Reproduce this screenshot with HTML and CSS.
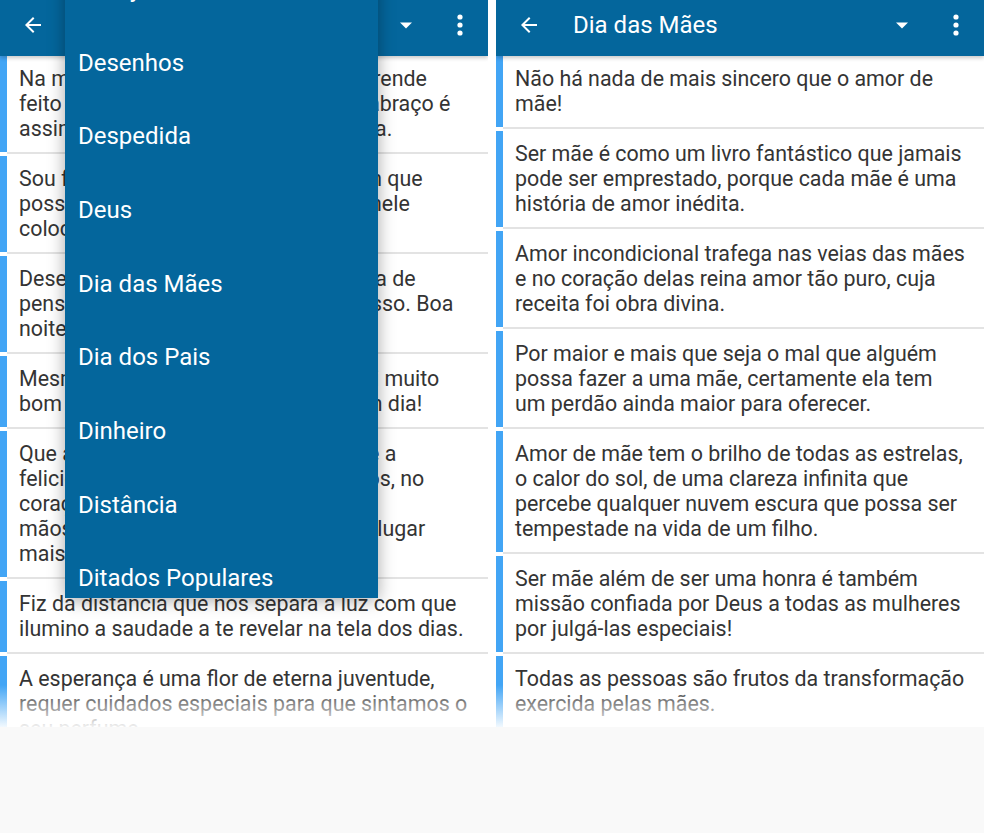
FILE: index.html
```html
<!DOCTYPE html>
<html lang="pt">
<head>
<meta charset="utf-8">
<title>Mensagens</title>
<link rel="stylesheet" href="styles.css">
</head>
<body>
<div class="screens">
  <section class="phone">
    <header class="appbar">
      <svg class="back" viewBox="0 0 24 24" width="24" height="24"><path d="M20 11H7.83l5.59-5.59L12 4l-8 8 8 8 1.41-1.41L7.83 13H20v-2z" fill="#fff"/></svg>
      <span class="title">Boa Noite</span>
      <svg class="drop" viewBox="0 0 14 7" width="14" height="7"><path d="M1 0.5h12L7 6.5z" fill="#fff"/></svg>
      <svg class="kebab" viewBox="0 0 6 22" width="6" height="22"><circle cx="3" cy="3" r="2.6" fill="#fff"/><circle cx="3" cy="11" r="2.6" fill="#fff"/><circle cx="3" cy="19" r="2.6" fill="#fff"/></svg>
    </header>
    <ul class="list">
      <li class="card"><p class="text">Na minha vida, a arte mais bela se aprende<br>feito um carinho leve, é que um bom abraço é<br>assim sempre cura uma alma cansada.</p></li>
      <li class="card"><p class="text">Sou feliz por ter na minha vida alguém que<br>possa me entender, confiar tudo que nele<br>colocar todos os meus sonhos.</p></li>
      <li class="card"><p class="text">Desejo que sua noite seja doce e cheia de<br>pensamentos bons, você só merece isso. Boa<br>noite!</p></li>
      <li class="card"><p class="text">Mesmo que o dia tenha sido difícil, foi muito<br>bom ter você por perto, tenha um bom dia!</p></li>
      <li class="card"><p class="text">Que a noite traga paz e a calma, e que a<br>felicidade esteja sempre em teus olhos, no<br>coração, e em cada gesto, e nas tuas<br>mãos, os sonhos que te levarão a um lugar<br>mais seguro.</p></li>
      <li class="card"><p class="text">Fiz da distancia que nos separa a luz com que ilumino a saudade a te revelar na tela dos dias.</p></li>
      <li class="card"><p class="text">A esperança é uma flor de eterna juventude, requer cuidados especiais para que sintamos o seu perfume.</p></li>
    </ul>
    <nav class="menu">
      <div class="menu-item">Desejos</div>
      <div class="menu-item">Desenhos</div>
      <div class="menu-item">Despedida</div>
      <div class="menu-item">Deus</div>
      <div class="menu-item">Dia das Mães</div>
      <div class="menu-item">Dia dos Pais</div>
      <div class="menu-item">Dinheiro</div>
      <div class="menu-item">Distância</div>
      <div class="menu-item">Ditados Populares</div>
    </nav>
  </section>
  <section class="phone">
    <header class="appbar">
      <svg class="back" viewBox="0 0 24 24" width="24" height="24"><path d="M20 11H7.83l5.59-5.59L12 4l-8 8 8 8 1.41-1.41L7.83 13H20v-2z" fill="#fff"/></svg>
      <span class="title">Dia das Mães</span>
      <svg class="drop" viewBox="0 0 14 7" width="14" height="7"><path d="M1 0.5h12L7 6.5z" fill="#fff"/></svg>
      <svg class="kebab" viewBox="0 0 6 22" width="6" height="22"><circle cx="3" cy="3" r="2.6" fill="#fff"/><circle cx="3" cy="11" r="2.6" fill="#fff"/><circle cx="3" cy="19" r="2.6" fill="#fff"/></svg>
    </header>
    <ul class="list">
      <li class="card"><p class="text">Não há nada de mais sincero que o amor de mãe!</p></li>
      <li class="card"><p class="text">Ser mãe é como um livro fantástico que jamais pode ser emprestado, porque cada mãe é uma história de amor inédita.</p></li>
      <li class="card"><p class="text">Amor incondicional trafega nas veias das mães e no coração delas reina amor tão puro, cuja receita foi obra divina.</p></li>
      <li class="card"><p class="text">Por maior e mais que seja o mal que alguém possa fazer a uma mãe, certamente ela tem um perdão ainda maior para oferecer.</p></li>
      <li class="card"><p class="text">Amor de mãe tem o brilho de todas as estrelas, o calor do sol, de uma clareza infinita que percebe qualquer nuvem escura que possa ser tempestade na vida de um filho.</p></li>
      <li class="card"><p class="text">Ser mãe além de ser uma honra é também missão confiada por Deus a todas as mulheres por julgá-las especiais!</p></li>
      <li class="card"><p class="text">Todas as pessoas são frutos da transformação exercida pelas mães.</p></li>
    </ul>
  </section>
  <div class="fade"></div>
</div>
<div class="bottom"></div>
</body>
</html>
```
FILE: styles.css
```css
* { box-sizing: border-box; }
html, body { margin: 0; padding: 0; }
body {
  width: 984px;
  height: 833px;
  overflow: hidden;
  background: #ffffff;
  font-family: Roboto, "Noto Sans", "Liberation Sans", sans-serif;
}
.screens {
  position: relative;
  display: flex;
  gap: 8px;
  height: 727px;
  overflow: hidden;
}
.phone {
  position: relative;
  flex: none;
  width: 488px;
  height: 100%;
  overflow: hidden;
  background: #ffffff;
}
.appbar {
  position: relative;
  z-index: 1;
  display: flex;
  align-items: center;
  height: 56px;
  padding: 0 25px 6px 21px;
  background: #04669c;
  box-shadow: 0 2px 4px rgba(0, 0, 0, 0.22);
  color: #fff;
}
.back { flex: none; }
.title {
  flex: 1;
  margin-left: 32px;
  font-size: 24px;
  line-height: 28px;
  white-space: nowrap;
}
.drop { flex: none; margin-top: 1px; }
.kebab { flex: none; margin-left: 44px; }
.list {
  list-style: none;
  margin: 0;
  padding: 0;
}
.card {
  display: flex;
  margin-bottom: 4px;
  border-left: 7px solid #42a5f5;
}
.text {
  flex: 1;
  margin: 0;
  padding: 10px 18px 11px 12px;
  font-size: 21.4px;
  line-height: 25px;
  color: #343434;
  background: #fff;
  box-shadow: 0 2px 0 #e3e3e3;
}
.menu {
  position: absolute;
  z-index: 2;
  left: 65px;
  top: -48px;
  width: 313px;
  height: 646px;
  overflow: hidden;
  background: #04669c;
  box-shadow: 0 2px 16px rgba(0, 0, 0, 0.35);
}
.menu-item {
  display: flex;
  align-items: center;
  height: 73.7px;
  padding-left: 13px;
  font-size: 24px;
  color: #fff;
  white-space: nowrap;
}
.fade {
  position: absolute;
  z-index: 3;
  left: 0;
  right: 0;
  bottom: 0;
  height: 42px;
  background: linear-gradient(rgba(255, 255, 255, 0), rgba(255, 255, 255, 0.93));
}
.bottom {
  height: 106px;
  background: #f9f9f9;
}
```
